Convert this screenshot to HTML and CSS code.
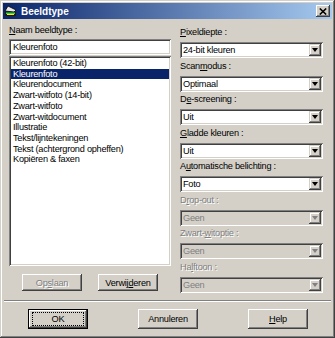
FILE: index.html
```html
<!DOCTYPE html>
<html lang="nl">
<head>
    <meta charset="UTF-8">
    <title>Beeldtype</title>
    <link rel="stylesheet" href="styles.css">
</head>
<body>
<div class="dialog">

    <!-- Title bar -->
    <div class="titlebar">
        <svg class="app-icon" viewBox="0 0 13 13" width="13" height="13">
            <polygon points="1,6 4,1 12,5 10,7" fill="#e8e8e8" stroke="#000" stroke-width="0.8"/>
            <polygon points="1,7 12,7 12,11 1,11" fill="#1a1a1a"/>
            <rect x="2" y="7.5" width="9" height="1.5" fill="#3fd23f"/>
            <rect x="3" y="9" width="7" height="1" fill="#f4f020"/>
        </svg>
        <span class="title">Beeldtype</span>
        <span class="close-btn">
            <svg viewBox="0 0 8 7" width="8" height="7">
                <path d="M0.8 0.5L7.2 6.5M7.2 0.5L0.8 6.5" stroke="#000" stroke-width="1.6"/>
            </svg>
        </span>
    </div>

    <div class="content">
        <!-- Left column: name + list -->
        <div class="left-col">
            <div class="label"><u>N</u>aam beeldtype :</div>
            <div class="textbox">Kleurenfoto</div>
            <ul class="listbox">
                <li>Kleurenfoto (42-bit)</li>
                <li class="selected">Kleurenfoto</li>
                <li>Kleurendocument</li>
                <li>Zwart-witfoto (14-bit)</li>
                <li>Zwart-witfoto</li>
                <li>Zwart-witdocument</li>
                <li>Illustratie</li>
                <li>Tekst/lijntekeningen</li>
                <li>Tekst (achtergrond opheffen)</li>
                <li>Kopiëren &amp; faxen</li>
            </ul>
            <div class="list-buttons">
                <button class="btn small" disabled>Op<u>s</u>laan</button>
                <button class="btn small">Verwij<u>d</u>eren</button>
            </div>
        </div>

        <!-- Right column: settings -->
        <div class="right-col">
            <div class="field">
                <div class="label"><u>P</u>ixeldiepte :</div>
                <div class="select"><span class="value">24-bit kleuren</span><span class="drop"><i></i></span></div>
            </div>
            <div class="field">
                <div class="label">Scan<u>m</u>odus :</div>
                <div class="select"><span class="value">Optimaal</span><span class="drop"><i></i></span></div>
            </div>
            <div class="field">
                <div class="label">D<u>e</u>-screening :</div>
                <div class="select"><span class="value">Uit</span><span class="drop"><i></i></span></div>
            </div>
            <div class="field">
                <div class="label"><u>G</u>ladde kleuren :</div>
                <div class="select"><span class="value">Uit</span><span class="drop"><i></i></span></div>
            </div>
            <div class="field">
                <div class="label">A<u>u</u>tomatische belichting :</div>
                <div class="select"><span class="value">Foto</span><span class="drop"><i></i></span></div>
            </div>
            <div class="field disabled">
                <div class="label">D<u>r</u>op-out :</div>
                <div class="select"><span class="value">Geen</span><span class="drop"><i></i></span></div>
            </div>
            <div class="field disabled">
                <div class="label">Zwart-<u>w</u>itoptie :</div>
                <div class="select"><span class="value">Geen</span><span class="drop"><i></i></span></div>
            </div>
            <div class="field disabled">
                <div class="label">Ha<u>l</u>ftoon :</div>
                <div class="select"><span class="value">Geen</span><span class="drop"><i></i></span></div>
            </div>
        </div>
    </div>

    <div class="separator"></div>

    <!-- Dialog buttons -->
    <div class="footer">
        <button class="btn default"><span class="focus-ring">OK</span></button>
        <button class="btn">Annuleren</button>
        <button class="btn"><u>H</u>elp</button>
    </div>
</div>
</body>
</html>
```

FILE: styles.css
```css
* {
    box-sizing: border-box;
}
body {
    margin: 0;
    background: #d4d0c8;
    font-family: "Liberation Sans", Arial, sans-serif;
    font-size: 9.2px;
    letter-spacing: -0.25px;
    color: #000;
}
.dialog {
    width: 335px;
    height: 338px;
    padding: 3px;
    background: #d4d0c8;
    box-shadow: inset -1px -1px #404040, inset 1px 1px #d4d0c8,
                inset -2px -2px #808080, inset 2px 2px #fff;
    overflow: hidden;
}
.titlebar {
    height: 16px;
    display: flex;
    align-items: center;
    padding: 0 2px 0 1px;
    background: linear-gradient(to right, #0a246a, #a6caf0);
    color: #fff;
}
.app-icon {
    flex: none;
}
.title {
    flex: 1;
    margin-left: 4px;
    font-weight: bold;
    font-size: 10px;
    letter-spacing: 0;
}
.close-btn {
    width: 14px;
    height: 12px;
    display: flex;
    align-items: center;
    justify-content: center;
    background: #d4d0c8;
    box-shadow: inset -1px -1px #404040, inset 1px 1px #fff,
                inset -2px -2px #808080, inset 2px 2px #d4d0c8;
}
.content {
    height: 281px;
    display: flex;
    gap: 9px;
    padding: 0 9px 0 6px;
}
.left-col {
    width: 162px;
    padding-top: 6px;
}
.right-col {
    flex: 1;
    padding-top: 8px;
    display: flex;
    flex-direction: column;
    gap: 2.5px;
}
.label {
    height: 11px;
    line-height: 11px;
    white-space: nowrap;
}
.left-col .label {
    margin-bottom: 3px;
}
.textbox {
    height: 16px;
    line-height: 16px;
    padding: 0 4px;
    background: #fff;
    box-shadow: inset 1px 1px #808080, inset -1px -1px #fff,
                inset 2px 2px #404040, inset -2px -2px #d4d0c8;
}
.listbox {
    list-style: none;
    margin: 1px 0 0;
    height: 210px;
    padding: 2px;
    background: #fff;
    box-shadow: inset 1px 1px #808080, inset -1px -1px #fff,
                inset 2px 2px #404040, inset -2px -2px #d4d0c8;
}
.listbox li {
    line-height: 10.7px;
    padding-left: 2px;
    white-space: nowrap;
}
.listbox li.selected {
    background: #0a246a;
    color: #fff;
}
.list-buttons {
    margin-top: 8px;
    display: flex;
    justify-content: center;
    gap: 16px;
}
.field .label {
    margin-bottom: 4px;
}
.select {
    height: 16px;
    display: flex;
    align-items: center;
    padding: 2px;
    background: #fff;
    box-shadow: inset 1px 1px #808080, inset -1px -1px #fff,
                inset 2px 2px #404040, inset -2px -2px #d4d0c8;
}
.select .value {
    flex: 1;
    padding-left: 1px;
}
.drop {
    width: 12px;
    height: 12px;
    display: flex;
    align-items: center;
    justify-content: center;
    background: #d4d0c8;
    box-shadow: inset -1px -1px #404040, inset 1px 1px #d4d0c8,
                inset -2px -2px #808080, inset 2px 2px #fff;
}
.drop i {
    width: 0;
    height: 0;
    border-left: 3.5px solid transparent;
    border-right: 3.5px solid transparent;
    border-top: 4px solid #000;
}
.field.disabled .label {
    color: #808080;
    text-shadow: 1px 1px 0 #fff;
}
.field.disabled .select {
    background: #d4d0c8;
    color: #808080;
}
.field.disabled .drop i {
    border-top-color: #808080;
}
.separator {
    height: 2px;
    margin: 0 1px;
    border-top: 1px solid #808080;
    border-bottom: 1px solid #fff;
}
.footer {
    display: flex;
    gap: 50px;
    padding: 7px 0 0 25px;
}
.btn {
    width: 60px;
    height: 20px;
    padding: 0;
    border: none;
    background: #d4d0c8;
    font-family: "Liberation Sans", Arial, sans-serif;
    font-size: 9.2px;
    letter-spacing: -0.25px;
    color: #000;
    box-shadow: inset -1px -1px #404040, inset 1px 1px #fff,
                inset -2px -2px #808080, inset 2px 2px #d4d0c8;
}
.btn.small {
    height: 17px;
}
.btn:disabled {
    color: #808080;
    text-shadow: 1px 1px 0 #fff;
}
.btn.default {
    box-shadow: inset 0 0 0 1px #000, inset -2px -2px #404040, inset 2px 2px #fff,
                inset -3px -3px #808080;
}
.focus-ring {
    display: block;
    margin: 0 4px;
    height: 14px;
    line-height: 12px;
    border: 1px dotted #000;
}
```
